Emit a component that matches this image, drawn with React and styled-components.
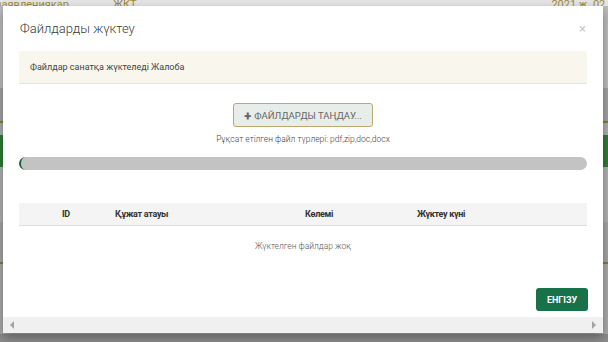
import React from "react";
import styled, { createGlobalStyle } from "styled-components";

const GlobalStyle = createGlobalStyle`
  html, body {
    margin: 0;
    padding: 0;
    background: #8c8c8c;
  }
  * {
    box-sizing: border-box;
  }
`;

const underRows = [
  { h: 6, bg: "#e6e6e6" },
  { h: 82, bg: "#bdbdbd" },
  { h: 33, bg: "#a3a3a3" },
  { h: 2, bg: "#8a7a35" },
  { h: 12, bg: "#b0b0b0" },
  { h: 32, bg: "#2f7d35" },
  { h: 55, bg: "#b2b2b2" },
  { h: 40, bg: "#a6a6a6" },
  { h: 2, bg: "#8a7a35" },
  { h: 70, bg: "#ababab" },
  { h: 8, bg: "#8c8c8c" },
];

const Page = styled.div`
  position: relative;
  width: 608px;
  height: 342px;
  overflow: hidden;
  font-family: Roboto, "Liberation Sans", sans-serif;
`;

const Underlay = styled.div`
  display: flex;
  flex-direction: column;
`;

const UnderRow = styled.div`
  height: ${(p) => p.$h}px;
  background: ${(p) => p.$bg};
  position: relative;
  overflow: hidden;
`;

const TopLine = styled.div`
  display: flex;
  align-items: flex-end;
  height: 6px;
  font-size: 11px;
  line-height: 11px;
  color: #a08a3a;
  white-space: nowrap;
  span {
    display: block;
    margin-bottom: -4px;
  }
`;

const Modal = styled.div`
  position: absolute;
  left: 3px;
  top: 6px;
  width: 600px;
  height: 327px;
  background: #fff;
  box-shadow: 0 4px 10px rgba(0, 0, 0, 0.35);
  display: flex;
  flex-direction: column;
`;

const Header = styled.div`
  display: flex;
  justify-content: space-between;
  align-items: center;
  height: 45px;
  padding: 0 17px 0 17px;
`;

const Title = styled.h4`
  margin: 0;
  font-size: 13px;
  font-weight: 300;
  color: #3a3a3a;
`;

const Close = styled.span`
  font-size: 13px;
  color: #c8c8c8;
  line-height: 1;
`;

const Body = styled.div`
  flex: 1;
  padding: 0 16px;
  display: flex;
  flex-direction: column;
`;

const Alert = styled.div`
  height: 33px;
  display: flex;
  align-items: center;
  padding: 0 11px;
  background: #f9f7ed;
  border-bottom: 1px solid #e6e3d8;
  border-radius: 2px;
  font-size: 9px;
  color: #444;
`;

const Center = styled.div`
  display: flex;
  flex-direction: column;
  align-items: center;
  margin-top: 19px;
`;

const PickButton = styled.button`
  height: 24px;
  width: 140px;
  padding: 0;
  border: 1px solid #bba86e;
  border-radius: 3px;
  background: #e7ede9;
  color: #666;
  font-family: Roboto, "Liberation Sans", sans-serif;
  font-size: 9.5px;
  display: flex;
  align-items: center;
  justify-content: center;
  gap: 3px;
  b {
    font-size: 13px;
    font-weight: 900;
    color: #666;
    line-height: 1;
  }
`;

const Hint = styled.div`
  margin-top: 7px;
  font-size: 8.5px;
  font-weight: 300;
  color: #444;
`;

const Progress = styled.div`
  margin-top: 13px;
  height: 13px;
  border-radius: 7px;
  background: #c3c3c3;
  border-left: 2px solid #1b5e3b;
`;

const Table = styled.table`
  margin-top: 33px;
  width: 100%;
  border-collapse: collapse;
  font-size: 9px;
  th {
    height: 22px;
    background: #f4f4f4;
    border-bottom: 1px solid #dedede;
    font-weight: 700;
    color: #333;
    text-align: left;
    letter-spacing: -0.3px;
  }
  td {
    height: 42px;
    text-align: center;
    color: #555;
    font-size: 8.5px;
    font-weight: 300;
  }
`;

const Th = styled.th`
  width: ${(p) => p.$w}px;
  padding-left: ${(p) => p.$pl || 0}px;
`;

const Footer = styled.div`
  display: flex;
  justify-content: flex-end;
  padding: 0 15px 6px 0;
  margin-top: auto;
`;

const SaveButton = styled.button`
  height: 23px;
  width: 52px;
  border: none;
  border-radius: 3px;
  background: #187249;
  color: #fff;
  font-family: Roboto, "Liberation Sans", sans-serif;
  font-weight: 700;
  font-size: 9px;
  padding: 0;
`;

const Scrollbar = styled.div`
  height: 16px;
  background: #f0f0f0;
  display: flex;
  justify-content: space-between;
  align-items: center;
  padding: 0 7px;
`;

const Arrow = styled.span`
  width: 0;
  height: 0;
  border-top: 4px solid transparent;
  border-bottom: 4px solid transparent;
  ${(p) =>
    p.$dir === "left"
      ? "border-right: 4px solid #a3a3a3;"
      : "border-left: 4px solid #a3a3a3;"}
`;

export default function App() {
  return (
    <>
      <GlobalStyle />
      <Page>
        <Underlay>
          {underRows.map((r, i) => (
            <UnderRow key={i} $h={r.h} $bg={r.bg}>
              {i === 0 && (
                <TopLine>
                  <span style={{ marginLeft: -4 }}>заявлениякар</span>
                  <span style={{ marginLeft: 44 }}>ЖКТ</span>
                  <span style={{ marginLeft: "auto", marginRight: -6 }}>
                    2021 ж. 02 ч
                  </span>
                </TopLine>
              )}
            </UnderRow>
          ))}
        </Underlay>
        <Modal>
          <Header>
            <Title>Файлдарды жүктеу</Title>
            <Close>×</Close>
          </Header>
          <Body>
            <Alert>Файлдар санатқа жүктеледі Жалоба</Alert>
            <Center>
              <PickButton>
                <b>+</b> ФАЙЛДАРДЫ ТАҢДАУ...
              </PickButton>
              <Hint>Рұқсат етілген файл түрлері: pdf,zip,doc,docx</Hint>
            </Center>
            <Progress />
            <Table>
              <thead>
                <tr>
                  <Th $w={96} $pl={43}>ID</Th>
                  <Th $w={190}>Құжат атауы</Th>
                  <Th $w={112}>Көлемі</Th>
                  <Th>Жүктеу күні</Th>
                </tr>
              </thead>
              <tbody>
                <tr>
                  <td colSpan={4}>Жүктелген файлдар жоқ</td>
                </tr>
              </tbody>
            </Table>
          </Body>
          <Footer>
            <SaveButton>ЕНГІЗУ</SaveButton>
          </Footer>
          <Scrollbar>
            <Arrow $dir="left" />
            <Arrow $dir="right" />
          </Scrollbar>
        </Modal>
      </Page>
    </>
  );
}
